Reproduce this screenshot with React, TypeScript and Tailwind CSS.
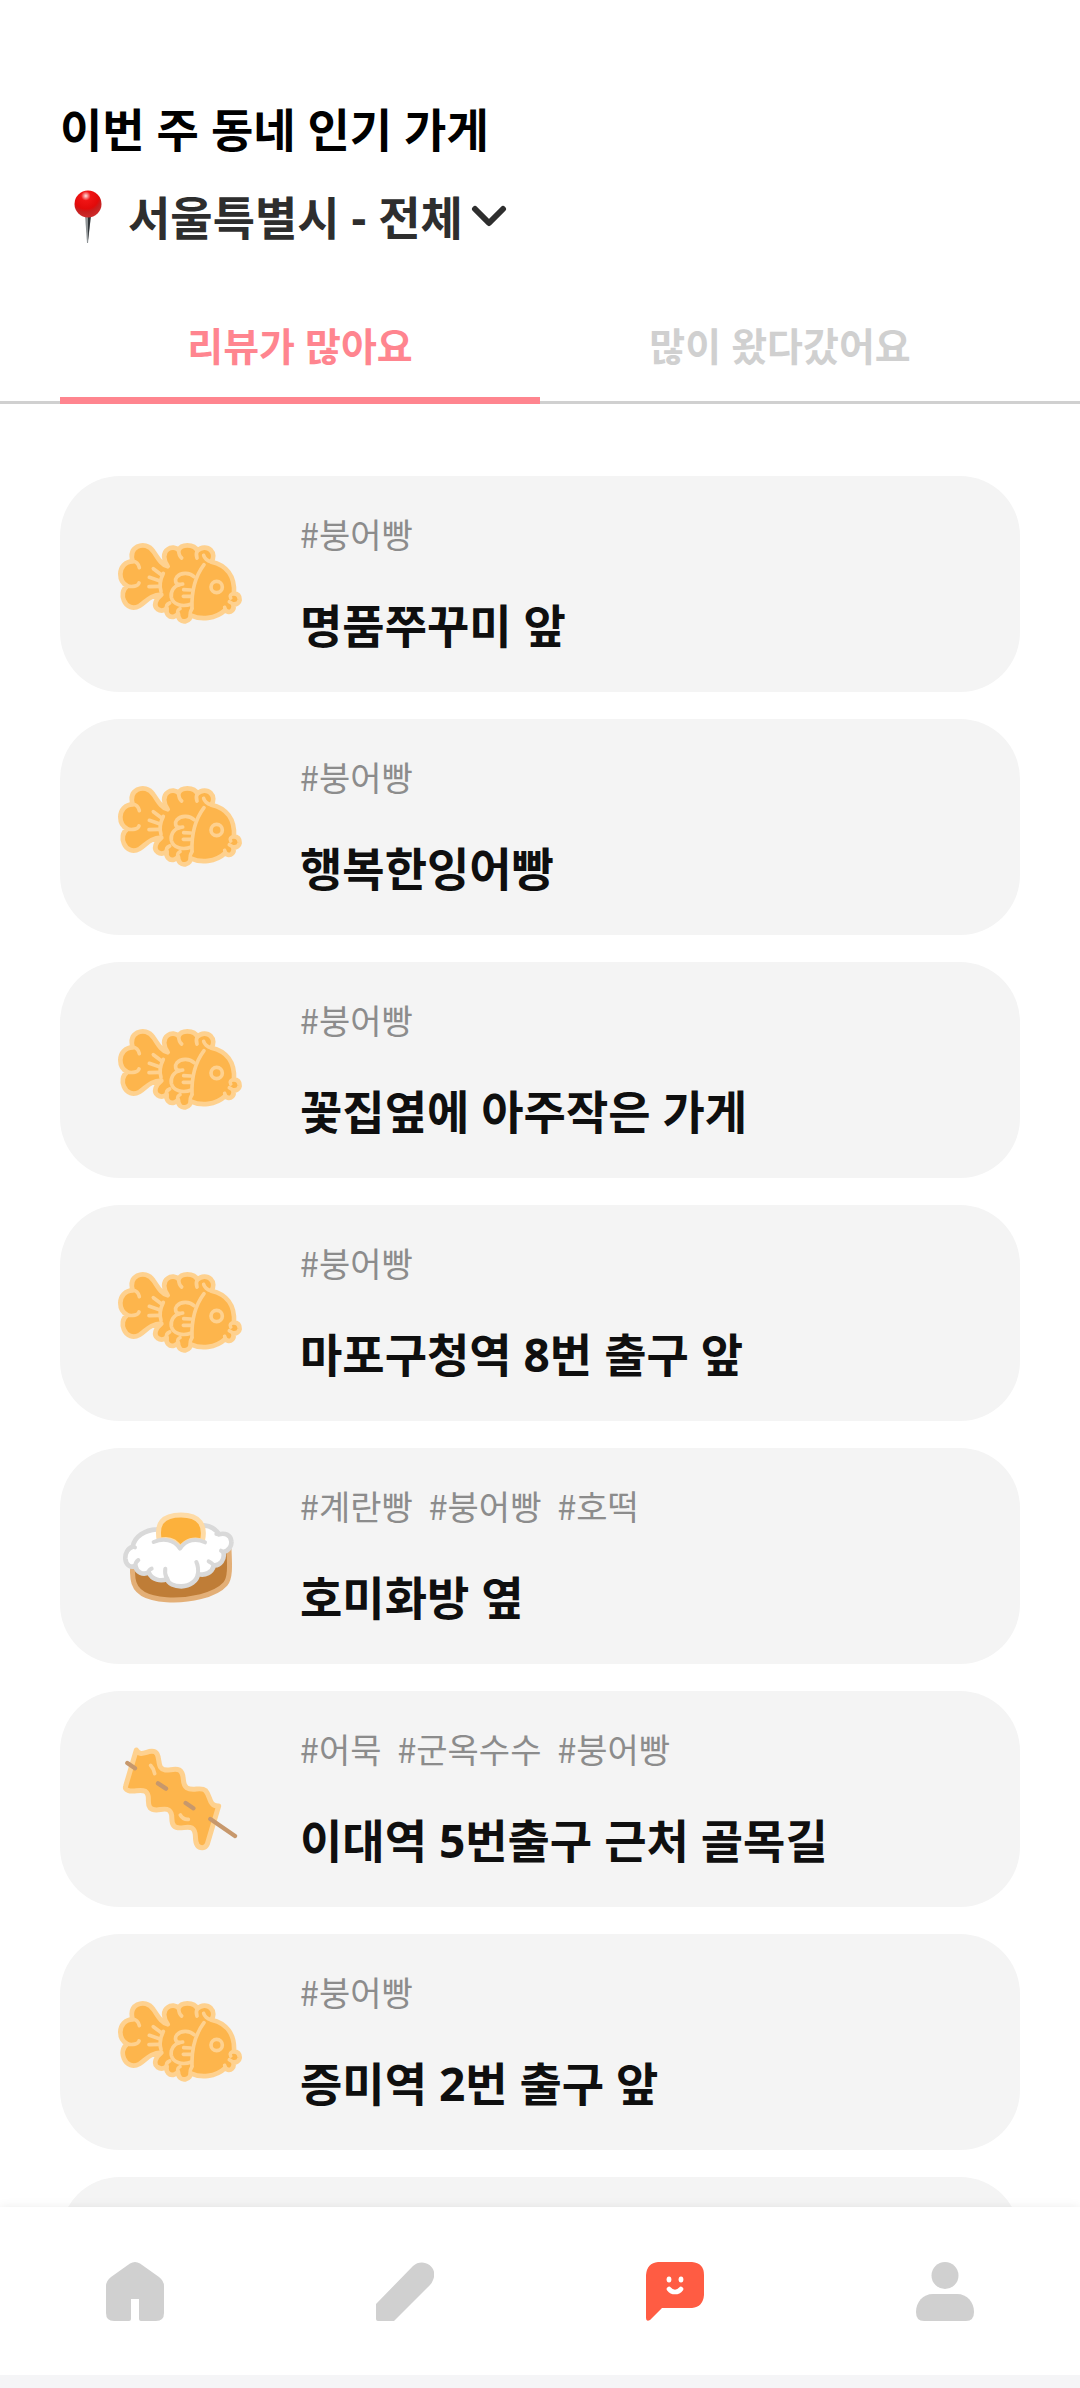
import { useState, type ReactNode } from "react";
import clsx from "clsx";

type FoodKind = "fish" | "egg" | "skewer";

type Store = {
  id: number;
  kind: FoodKind;
  tags: string[];
  name: string;
};

const stores: Store[] = [
  { id: 1, kind: "fish", tags: ["붕어빵"], name: "명품쭈꾸미 앞" },
  { id: 2, kind: "fish", tags: ["붕어빵"], name: "행복한잉어빵" },
  { id: 3, kind: "fish", tags: ["붕어빵"], name: "꽃집옆에 아주작은 가게" },
  { id: 4, kind: "fish", tags: ["붕어빵"], name: "마포구청역 8번 출구 앞" },
  { id: 5, kind: "egg", tags: ["계란빵", "붕어빵", "호떡"], name: "호미화방 옆" },
  { id: 6, kind: "skewer", tags: ["어묵", "군옥수수", "붕어빵"], name: "이대역 5번출구 근처 골목길" },
  { id: 7, kind: "fish", tags: ["붕어빵"], name: "증미역 2번 출구 앞" },
];

const tabs = ["리뷰가 많아요", "많이 왔다갔어요"];

function FishIcon() {
  return (
    <svg viewBox="24 -26 432 432" className="size-36 shrink-0" aria-hidden>
      <g stroke="#fed18f" strokeWidth="11" strokeLinecap="round" strokeLinejoin="round" fill="none">
        <path
          fill="#fdb54c"
          strokeWidth="14"
          d="M203 137C182 132 172 108 160 92C148 74 128 70 112 78C97 86 92 102 98 122C76 122 61 140 61 160C61 178 70 190 82 196C67 206 65 225 72 240C80 260 100 266 118 256C138 244 150 222 184 222C166 236 160 256 172 265C182 272 192 270 200 264C197 280 208 292 222 288C227 286 231 284 234 280C234 296 244 304 256 302C268 300 272 291 272 284C302 298 346 296 376 268C380 274 390 276 396 270C401 265 402 258 400 251C410 252 418 246 419 238C420 226 412 218 402 218C405 165 378 133 334 123C342 114 342 98 332 88C322 78 304 78 292 90C288 80 276 74 262 74C250 74 240 78 236 88C228 80 214 78 203 86C188 96 190 118 203 137Z"
        />
        <path d="M98 122C108 122 116 130 118 141M82 196C98 200 114 196 117 187" />
        <path d="M236 88C236 100 239 107 245 112M292 90C288 98 288 104 291 112M334 123C322 122 313 112 311 104" />
        <path d="M190 158C180 178 178 196 183 212" />
        <path d="M160 144L184 162M148 170L178 180M147 198L178 197" />
        <path d="M312 132C288 164 274 204 276 262" />
        <path d="M282 168C268 154 242 156 231 168C223 178 226 190 238 192C222 196 211 212 214 230C219 252 248 260 274 250" />
        <path d="M238 192L248 190M251 207L272 208M250 227H272" />
        <path d="M200 264C198 256 202 250 209 247M234 280C231 272 235 266 240 264M272 284C268 276 272 270 276 264" />
        <path d="M402 218C392 220 388 226 392 232M376 268L374 260M400 251L388 243" />
        <circle cx="350" cy="199" r="17" />
      </g>
    </svg>
  );
}

function EggBreadIcon() {
  return (
    <svg viewBox="24 -20 432 432" className="size-36 shrink-0" aria-hidden>
      <g strokeLinecap="round" strokeLinejoin="round">
        <path
          fill="#bf7d37"
          stroke="#e3af77"
          strokeWidth="15"
          d="M98 220C97 236 97 250 99 264C104 306 140 324 200 327C268 331 346 314 376 280C392 262 389 220 387 176Z"
        />
        <path
          fill="#fff"
          stroke="#d9d9d9"
          strokeWidth="14"
          d="M170 116C136 118 104 136 98 168C84 172 75 188 76 204C78 224 92 232 106 226C110 246 130 254 146 245C156 268 184 274 201 264C204 280 224 287 244 287C270 287 292 270 294 250C316 256 336 246 342 224C360 226 376 206 370 184C385 182 396 166 394 152C392 132 374 126 357 131C347 114 332 106 312 104Z"
        />
        <path
          fill="#fcb13c"
          stroke="#fedba6"
          strokeWidth="15"
          d="M178 150C168 100 186 73 243 73C300 73 318 104 307 152C284 142 256 150 241 174C226 150 204 142 178 150Z"
        />
        <path fill="#fff" d="M162 154C190 142 222 146 240 174C258 146 290 142 316 156L310 200H165Z" />
        <path
          fill="none"
          stroke="#d9d9d9"
          strokeWidth="12"
          d="M161 154C190 142 222 146 240 174C258 146 290 142 315 155M98 168L105 170M106 226C106 218 109 212 115 208M146 245C146 240 150 236 155 234M201 264C195 254 194 244 196 234M294 250C295 236 294 224 289 214M342 224C338 220 333 215 326 212M370 184L363 180M357 131L349 130"
        />
      </g>
    </svg>
  );
}

function SkewerIcon() {
  return (
    <svg viewBox="24 -11 432 432" className="size-36 shrink-0" aria-hidden>
      <g strokeLinecap="round" strokeLinejoin="round" fill="none">
        <path
          fill="#fdb54c"
          stroke="#fed18f"
          strokeWidth="15"
          d="M109 58C120 78 138 63 154 62C182 60 172 96 182 110C194 128 220 110 238 118C258 130 242 158 260 171C278 184 302 166 317 180C332 196 326 228 356 226L322 340C316 354 300 354 292 344C280 326 294 304 276 292C258 284 236 300 222 286C208 270 224 250 206 238C190 228 166 248 150 231C138 214 154 194 136 182C118 174 102 186 84 179C77 177 75 172 77 166Z"
        />
        <path stroke="#fed18f" strokeWidth="11" d="M152 104C158 110 162 118 164 129M241 253C246 262 254 267 265 266" />
        <path stroke="#c7986c" strokeWidth="13" d="M82 97L105 113M174 158L198 174M257 217L280 233M331 265L405 316" />
      </g>
    </svg>
  );
}

const foodIcons: Record<FoodKind, () => ReactNode> = {
  fish: FishIcon,
  egg: EggBreadIcon,
  skewer: SkewerIcon,
};

function PinIcon() {
  return (
    <svg viewBox="0 0 28 54" className="h-[54px] w-7 shrink-0" aria-hidden>
      <defs>
        <radialGradient id="pin-head" cx="0.42" cy="0.2" r="0.8">
          <stop offset="0" stopColor="#ffe0e0" />
          <stop offset="0.22" stopColor="#f01414" />
          <stop offset="0.6" stopColor="#e20a0a" />
          <stop offset="0.75" stopColor="#c52020" />
          <stop offset="1" stopColor="#cf2c2c" />
        </radialGradient>
      </defs>
      <path d="M11 25H17L14 53H13Z" fill="#8f9496" />
      <path d="M14 25H17L14 50Z" fill="#303438" />
      <circle cx="14" cy="14" r="13.5" fill="url(#pin-head)" />
    </svg>
  );
}

function StoreCard({ store }: { store: Store }) {
  const Icon = foodIcons[store.kind];

  return (
    <li className="flex h-[216px] shrink-0 items-center gap-12 rounded-[60px] bg-[#f4f4f4] px-12">
      <Icon />
      <div className="flex min-w-0 flex-col gap-8">
        <p className="flex gap-4 font-['Noto_Sans_CJK_KR',sans-serif] text-[34px] leading-[50px] text-[#8c8c8c]">
          {store.tags.map((tag) => (
            <span key={tag}>#{tag}</span>
          ))}
        </p>
        <h2 className="text-[46px] leading-[68px] font-bold text-[#0f0f0f]">{store.name}</h2>
      </div>
    </li>
  );
}

const navItems = [
  {
    label: "홈",
    icon: (
      <path d="M24 1.5Q29 -1.5 34 1.5L53 15Q58 19 58 24V51Q58 59 50 59H35Q33 59 33 57V37H25V57Q25 59 23 59H8Q0 59 0 51V24Q0 19 5 15Z" />
    ),
  },
  {
    label: "글쓰기",
    icon: <path d="M0 42L37 4C47 -5 63 5 57 18Q56 21 54 23L18 59H2Q0 59 0 57Z" />,
  },
  {
    label: "인기 가게",
    icon: (
      <>
        <path d="M12 0H46Q58 1 58 13V33Q57 45 46 46H16L4 58Q0 60 0 56V13Q1 1 12 0Z" />
        <ellipse cx="23" cy="17.5" rx="2.4" ry="3" fill="#fff" />
        <ellipse cx="35" cy="17.5" rx="2.4" ry="3" fill="#fff" />
        <path d="M23 27C26 31 32 31 35 27" fill="none" stroke="#fff" strokeWidth="4.6" strokeLinecap="round" />
      </>
    ),
  },
  {
    label: "마이페이지",
    icon: (
      <>
        <circle cx="29" cy="13.5" r="13.5" />
        <path d="M17 32H41C51 32 58 40 58 50Q58 59 50 59H8Q0 59 0 50C0 40 7 32 17 32Z" />
      </>
    ),
  },
];

export default function App() {
  const [tab, setTab] = useState(0);

  return (
    <div className="flex h-screen flex-col overflow-hidden bg-white font-['Noto_Sans','Noto_Sans_CJK_KR',sans-serif]">
      <header className="px-15 pt-[95px]">
        <h1 className="text-[46px] leading-[68px] font-bold text-black">이번 주 동네 인기 가게</h1>
        <div className="mt-5 flex items-center pl-3.5">
          <PinIcon />
          <div className="relative ml-[26px] flex items-center">
            <select
              aria-label="지역 선택"
              className="appearance-none bg-transparent pr-11 text-[46px] leading-[68px] font-bold text-[#2e2e2e] outline-none"
            >
              <option>서울특별시 - 전체</option>
            </select>
            <svg
              viewBox="0 0 36 24"
              className="pointer-events-none absolute right-0 h-6 w-9"
              fill="none"
              stroke="#2e2e2e"
              strokeWidth="6"
              strokeLinecap="round"
              strokeLinejoin="round"
              aria-hidden
            >
              <path d="M4 4L18 18L32 4" />
            </svg>
          </div>
        </div>
      </header>

      {/* Tabs */}
      <div role="tablist" className="mt-[49px] flex px-15 shadow-[inset_0_-3px_0_#d0d0d0]">
        {tabs.map((label, i) => (
          <button
            key={label}
            type="button"
            role="tab"
            aria-selected={tab === i}
            onClick={() => setTab(i)}
            className={clsx(
              "h-[104px] flex-1 border-b-[7px] pb-1.5 text-[39px] leading-[60px] font-bold",
              tab === i ? "border-[#ff858f] text-[#ff858f]" : "border-transparent text-[#d0d0d0]",
            )}
          >
            {label}
          </button>
        ))}
      </div>

      <ul className="flex min-h-0 flex-1 flex-col gap-[27px] overflow-y-auto px-15 pt-18 [scrollbar-width:none]">
        {stores.map((store) => (
          <StoreCard key={store.id} store={store} />
        ))}
        <li aria-hidden className="h-[216px] shrink-0 rounded-[60px] bg-[#f4f4f4]" />
      </ul>

      <nav className="relative flex h-[168px] shrink-0 bg-white shadow-[0_0_10px_rgba(0,0,0,0.08)]">
        {navItems.map((item, i) => (
          <a
            key={item.label}
            href="#"
            aria-label={item.label}
            className={clsx(
              "flex flex-1 items-center justify-center",
              i === 2 ? "text-[#ff5c43]" : "text-[#d0d0d0]",
            )}
          >
            <svg viewBox="0 0 58 59" className="h-[59px] w-[58px]" fill="currentColor" aria-hidden>
              {item.icon}
            </svg>
          </a>
        ))}
      </nav>
      <div className="relative h-[13px] shrink-0 bg-[#f5f5f7]" />
    </div>
  );
}
